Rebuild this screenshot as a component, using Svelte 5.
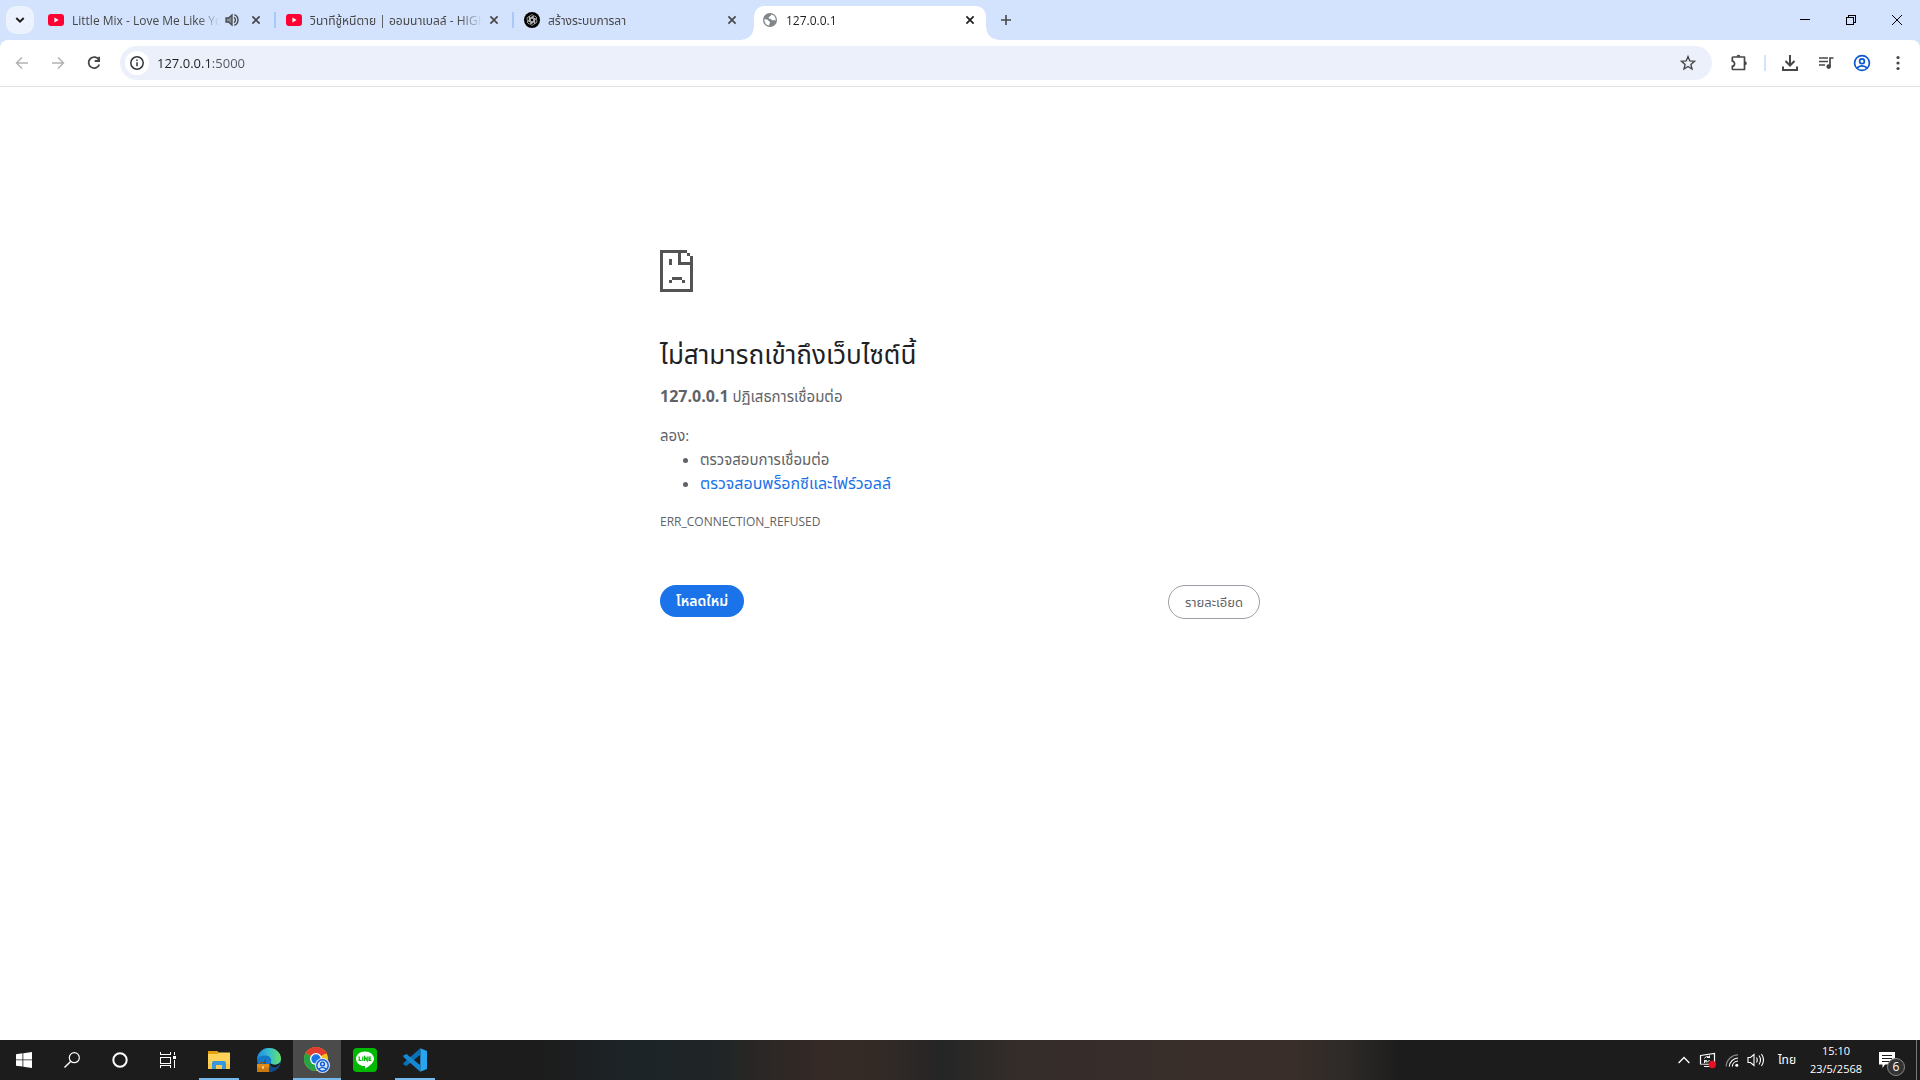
<script>
  const tabs = [
    { title: 'Little Mix - Love Me Like You', icon: 'youtube', audio: true },
    { title: 'วินาทีชู้หนีตาย | ออมนาเบลล์ - HIGHLIGHT', icon: 'youtube' },
    { title: 'สร้างระบบการลา', icon: 'gpt' },
    { title: '127.0.0.1', icon: 'globe', active: true }
  ];
  let url = $state('127.0.0.1:5000');
</script>

{#snippet cross()}
  <svg viewBox="0 0 16 16" width="16" height="16"><path d="M4.4 4.4l7.2 7.2M11.6 4.4l-7.2 7.2" fill="none" stroke="currentColor" stroke-width="1.7" /></svg>
{/snippet}

{#snippet favicon(kind)}
  {#if kind === 'youtube'}
    <svg viewBox="0 0 16 16" width="16" height="16"><rect y="2" width="16" height="12" rx="3" fill="#ff0033" /><path d="M6.4 5.6v4.8L10.6 8z" fill="#fff" /></svg>
  {:else if kind === 'gpt'}
    <svg viewBox="0 0 16 16" width="16" height="16">
      <circle cx="8" cy="8" r="8" fill="#000" />
      <g fill="none" stroke="#ccc" stroke-width=".7">
        {#each [0, 60, 120, 180, 240, 300] as a}
          <path transform="rotate({a} 8 8)" d="M5.400 9.400V5.200a2.300 2.300 0 0 1 4.300-1.200L6.400 5.900v3.400" />
        {/each}
      </g>
    </svg>
  {:else}
    <svg viewBox="0 0 16 16" width="16" height="16"><circle cx="8" cy="8" r="7" fill="#80868b" /><path d="M2.300 7.300c2 0 3.400.2 4 1.100.4.900 1.500.8 1.700 1.800.1.900-.8 1.300-.9 3.400A5.800 5.800 0 0 1 2.300 7.300zM9.300 2.400c-.1 1-.7 1.500-1.600 1.600-.2 1.200-.7 1.400-1.200 1.900.4.700.9 1 1.900.9.900.2 1 1.300 1.800 1.500 1.200 0 2.200-.3 3.500.3A5.900 5.900 0 0 0 9.300 2.400z" fill="#fff" /></svg>
  {/if}
{/snippet}

<div class="screen">
  <header class="tabbar">
    <button class="tabsearch" aria-label="ค้นหาแท็บ"><svg viewBox="0 0 16 16" width="16" height="16"><path d="M4.300 6l3.700 3.700L11.700 6" fill="none" stroke="#1f1f1f" stroke-width="2" /></svg></button>
    <div class="tabs">
      {#each tabs as tab}
        <div class="tab" class:active={tab.active}>
          {@render favicon(tab.icon)}
          <button class="title">{tab.title}</button>
          {#if tab.audio}
            <button class="mini" aria-label="ปิดเสียงแท็บ"><svg viewBox="0 0 16 16" width="16" height="16"><path d="M2 6h2.500L8 3v10l-3.500-3H2z" fill="#8b9098" stroke="#474b50" stroke-width="1.300" /><path d="M10 5.300a3.200 3.200 0 0 1 0 5.400M10.300 2.600a5.800 5.800 0 0 1 0 10.800" fill="none" stroke="#474b50" stroke-width="1.400" /></svg></button>
          {/if}
          <button class="mini" aria-label="ปิด">{@render cross()}</button>
        </div>
      {/each}
    </div>
    <button class="newtab" aria-label="แท็บใหม่"><svg viewBox="0 0 16 16" width="16" height="16"><path d="M8 3v10M3 8h10" stroke="#474747" stroke-width="1.600" /></svg></button>
    <div class="window">
      <button aria-label="ย่อ"><svg viewBox="0 0 10 10" width="10" height="10" shape-rendering="crispEdges"><path d="M0 4.500h10" stroke="#000" /></svg></button>
      <button aria-label="คืนค่า"><svg viewBox="0 0 10 10" width="10" height="10" shape-rendering="crispEdges"><path d="M.5 2.500h7v7h-7zM2.500 2.500v-2h7v7h-2" fill="none" stroke="#000" /></svg></button>
      <button aria-label="ปิดหน้าต่าง"><svg viewBox="0 0 10 10" width="10" height="10"><path d="M0 0l10 10M10 0L0 10" stroke="#000" /></svg></button>
    </div>
  </header>

  <nav class="toolbar">
    <button class="tool" aria-label="ย้อนกลับ"><svg viewBox="0 0 20 20" width="20" height="20"><path d="M16 10H5M10 4.500L4.500 10l5.500 5.500" fill="none" stroke="#b1b2b4" stroke-width="1.500" /></svg></button>
    <button class="tool" aria-label="ไปข้างหน้า"><svg viewBox="0 0 20 20" width="20" height="20"><path d="M4 10h11M10 4.500l5.500 5.500-5.500 5.500" fill="none" stroke="#b1b2b4" stroke-width="1.500" /></svg></button>
    <button class="tool" aria-label="โหลดซ้ำ"><svg viewBox="0 0 20 20" width="20" height="20"><path d="M15 7A5.500 5.500 0 1 0 15.300 11.500" fill="none" stroke="#474747" stroke-width="1.800" /><path d="M15.100 3.800V8h-4.400" fill="none" stroke="#474747" stroke-width="1.800" /></svg></button>
    <div class="omnibox">
      <button class="info" aria-label="ดูข้อมูลเว็บไซต์"><svg viewBox="0 0 16 16" width="16" height="16"><circle cx="8" cy="8" r="6.200" fill="none" stroke="#30343a" stroke-width="1.500" /><path d="M8 7.200v4M8 4.500v1.500" stroke="#30343a" stroke-width="1.500" /></svg></button>
      <input aria-label="ที่อยู่" bind:value={url} spellcheck="false" />
      <button class="info star" aria-label="บุ๊กมาร์ก"><svg viewBox="0 0 18 18" width="18" height="18"><path d="M9 2.500l1.800 4.400 4.700.4-3.600 3.100 1.100 4.600L9 12.500 5 15l1.100-4.600-3.600-3.100 4.700-.4z" fill="none" stroke="#474747" stroke-width="1.400" /></svg></button>
    </div>
    <button class="tool" aria-label="ส่วนขยาย"><svg viewBox="0 0 20 20" width="20" height="20"><path d="M4 4h11.500v12.500H4q-.7 0-.7-.7v-2.600c3 0 3-5 0-5V4.700Q3.300 4 4 4z" fill="none" stroke="#474747" stroke-width="1.700" stroke-linejoin="round" /><path d="M7.500 3.700a2 2 0 0 1 4 0zM15.800 8.200a2 2 0 0 1 0 4z" fill="#474747" /></svg></button>
    <i class="divider"></i>
    <button class="tool" aria-label="ดาวน์โหลด"><svg viewBox="0 0 20 20" width="20" height="20"><path d="M10 2v10M5.500 8l4.500 4.500L14.500 8M3 13.500V17h14v-3.500" fill="none" stroke="#474747" stroke-width="2" /></svg></button>
    <button class="tool" aria-label="ควบคุมสื่อ"><svg viewBox="0 0 20 20" width="20" height="20"><path d="M3 5h9M3 8.500h9M3 12h6M14 14V5h3.500" fill="none" stroke="#474747" stroke-width="1.700" /><circle cx="12.700" cy="13.600" r="2.300" fill="#474747" /></svg></button>
    <button class="tool" aria-label="โปรไฟล์"><svg viewBox="0 0 20 20" width="20" height="20"><g fill="none" stroke="#0b57d0" stroke-width="1.700"><circle cx="10" cy="10" r="7.400" /><circle cx="10" cy="8.200" r="2.400" /><path d="M4.800 15.200c2.800-3 7.600-3 10.400 0" /></g></svg></button>
    <button class="tool" aria-label="เมนู"><svg viewBox="0 0 20 20" width="20" height="20"><g fill="#474747"><circle cx="10" cy="4.500" r="1.600" /><circle cx="10" cy="10" r="1.600" /><circle cx="10" cy="15.500" r="1.600" /></g></svg></button>
  </nav>

  <main>
    <div class="error">
      <svg class="sad" viewBox="0 0 33 42" width="33" height="42" shape-rendering="crispEdges" fill="#535353"><path d="M0 0h27v3H3v36h27V6h3v36H0zM27 3h3v3h-3zM18 3h3v9h9v3H18zM9 9h3v6H9zM12 27h10v3H12zM9 30h3v3H9zM22 30h3v3h-3z" /></svg>
      <h1>ไม่สามารถเข้าถึงเว็บไซต์นี้</h1>
      <p><strong>127.0.0.1</strong> ปฏิเสธการเชื่อมต่อ</p>
      <div class="try">
        <p>ลอง:</p>
        <ul>
          <li>ตรวจสอบการเชื่อมต่อ</li>
          <li><a href="#buttons">ตรวจสอบพร็อกซีและไฟร์วอลล์</a></li>
        </ul>
      </div>
      <p class="code">ERR_CONNECTION_REFUSED</p>
      <div class="actions" id="buttons">
        <button class="reload">โหลดใหม่</button>
        <button class="details">รายละเอียด</button>
      </div>
    </div>
  </main>

  <footer class="taskbar">
    <button class="app" aria-label="เริ่ม"><svg viewBox="0 0 16 16" width="16" height="16" fill="#fff"><path d="M0 2.200l6.500-.9v6.200H0zM7.300 1.200L16 0v7.500H7.300zM0 8.300h6.500v6.300L0 13.800zM7.300 8.300H16V16l-8.700-1.200z" /></svg></button>
    <button class="app" aria-label="ค้นหา"><svg viewBox="0 0 16 16" width="16" height="16"><circle cx="10.300" cy="5.700" r="5" fill="none" stroke="#fff" stroke-width="1.200" /><path d="M6.600 9.400L.5 15.500" stroke="#fff" stroke-width="1.400" /></svg></button>
    <button class="app" aria-label="Cortana"><svg viewBox="0 0 16 16" width="16" height="16"><circle cx="8" cy="8" r="6.700" fill="none" stroke="#fff" stroke-width="2" /></svg></button>
    <button class="app" aria-label="มุมมองงาน"><svg viewBox="0 0 16 16" width="16" height="16" shape-rendering="crispEdges"><path d="M.5 0v2.500h10V0M.5 5.500h10v6H.5zM.5 16v-2.500h10V16M14.500 0v3M14.500 8v8" fill="none" stroke="#fff" /><path d="M13 4h3v3h-3z" fill="#fff" /></svg></button>
    <button class="app wide first running" aria-label="File Explorer"><svg viewBox="0 0 22 18" width="22" height="18"><path d="M0 0h9l1.500 1.500H22V18H0z" fill="#ffd35a" /><path d="M0 0h9l1 1v2H0z" fill="#e5a00d" /><path d="M0 13h22v5H0z" fill="#fbc94b" /><path d="M4 18v-6q0-2 2-2h10q2 0 2 2v6h-4v-4H8v4z" fill="#3a96dd" /></svg></button>
    <button class="app" aria-label="Microsoft Edge">
      <svg viewBox="0 0 24 24" width="24" height="24">
        <defs>
          <linearGradient id="edgeTop"><stop offset=".1" stop-color="#2393dc" /><stop offset=".5" stop-color="#36bfcd" /><stop offset="1" stop-color="#69df67" /></linearGradient>
        </defs>
        <circle cx="12" cy="12" r="11.900" fill="#1479c9" />
        <path d="M8.600 11c-1 6 4 9 8.500 8 2.500-.4 4-1.600 5.500-3.300C19 25 12 25 9 22s-3-8-.4-11z" fill="#114a8b" />
        <path d="M23.900 12.500c-1 3-3.500 4-6.500 4-2 0-3.600-.4-4.200-1.400-1.500 3 2.500 5.400 6.300 4 1.500-.5 2.500-1.400 3.300-2.500z" fill="#1c1c1c" />
        <path d="M0 11C1 4 6 0 12 0c7 0 12 5 12 10.500 0 4-3 6-6.500 6-3 0-4-1-3.500-2.500 1-3-1-6.500-5.500-6.500C4.500 7.500 1 9 0 11z" fill="url(#edgeTop)" />
        <rect y="16" width="12" height="8" fill="#c97812" /><path d="M0 16h12v3.500H0z" fill="#e18b16" /><path d="M3.500 16v-1.500h5V16" fill="none" stroke="#8b520a" /><rect x="5" y="18.500" width="2" height="2" fill="#ffe089" />
      </svg>
    </button>
    <button class="app current running" aria-label="Google Chrome">
      <svg viewBox="0 0 26 26" width="26" height="26">
        <circle cx="12" cy="12" r="12" fill="#fbc116" />
        <path d="M12 12L1.600 6A12 12 0 0 1 22.400 6z" fill="#e33b2e" />
        <path d="M12 12L1.600 6A12 12 0 0 0 12 24l5-9z" fill="#26a344" />
        <path d="M12 6h10.400" stroke="#e33b2e" stroke-width="2" />
        <circle cx="12" cy="12" r="6" fill="#fff" /><circle cx="12" cy="12" r="4.700" fill="#1a73e8" />
        <circle cx="18.500" cy="18.500" r="7.500" fill="#d3e3fd" /><g fill="none" stroke="#0b57d0" stroke-width="1.400"><circle cx="18.500" cy="18.500" r="5.700" /><circle cx="18.500" cy="17" r="1.900" /><path d="M14.500 22.300c2.300-2.200 5.700-2.200 8 0" /></g>
      </svg>
    </button>
    <button class="app" aria-label="LINE"><svg viewBox="0 0 24 24" width="24" height="24"><rect width="24" height="24" rx="4" fill="#00b900" /><path d="M12 3.500c5 0 9 3.200 9 7.200 0 3.700-4 7-9 10 .4-1.500.5-2.500-.5-2.600C6.500 17.800 3 14.600 3 10.700c0-4 4-7.200 9-7.200z" fill="#fff" /><g fill="none" stroke="#00b900" stroke-width="1.200"><path d="M6.200 8.500v4h2.300M9.800 8.500v4.500M11.600 13V8.800l2.600 3.700V8.500M18.300 9h-2.300v3.500h2.300M16 10.800h2" /></g></svg></button>
    <button class="app wide running" aria-label="Visual Studio Code"><svg viewBox="0 0 24 24" width="24" height="24"><path d="M17.300.3L24 3v18l-6.700 2.700z" fill="#29a5ee" /><path d="M17.300.3v6.500L3.500 18 0 16.200 1 14.500z" fill="#0871b7" /><path d="M17.300 23.700v-6.500L3.500 6 0 7.800l1 1.700z" fill="#1689d4" /></svg></button>

    <div class="tray">
      <button aria-label="แสดงไอคอนที่ซ่อน"><svg viewBox="0 0 12 12" width="12" height="12"><path d="M.6 9L6 3.500 11.400 9" fill="none" stroke="#fff" stroke-width="1.300" /></svg></button>
      <button aria-label="Windows Update"><svg viewBox="0 0 18 18" width="18" height="18"><path d="M1.500 4.500l14-2v11l-14-.5zM5 15.500h6" fill="none" stroke="#fff" stroke-width="1.200" /><path d="M5.500 7.500a3 3 0 0 1 5-1V4.500M10.500 9a3 3 0 0 1-5 1V12M8 6.500h3M5 9.600h3" fill="none" stroke="#fff" /><circle cx="13.300" cy="13.500" r="3.700" fill="#e81123" /></svg></button>
      <button aria-label="เครือข่าย"><svg viewBox="0 0 14 14" width="14" height="14"><g fill="none" stroke="#fff" stroke-width="1.200"><path d="M1.200 13.500A12 12 0 0 1 13 1.800" stroke="#8a8a8a" /><path d="M4.300 13.500A9 9 0 0 1 13 5M7.300 13.500A6 6 0 0 1 13 8" /></g><circle cx="11.800" cy="12.300" r="1.500" fill="#fff" /></svg></button>
      <button aria-label="เสียง"><svg viewBox="0 0 18 16" width="18" height="16"><path d="M1 5.500h2.500L7 2.500v11l-3.500-3H1z" fill="none" stroke="#fff" stroke-width="1.100" /><path d="M9.500 5.500q1.500 2.500 0 5M12 3.500q3 4.500 0 9M14.500 2q4 6 0 12" fill="none" stroke="#fff" stroke-width="1.100" /></svg></button>
      <button class="lang">ไทย</button>
      <button class="clock"><time>15:10</time><time>23/5/2568</time></button>
      <button class="notice" aria-label="การแจ้งเตือน"><svg viewBox="0 0 16 16" width="16" height="16"><path d="M0 0h16v12.500H6L3.500 16v-3.500H0z" fill="#fff" /><path d="M3 3.500h10M3 6.500h10M3 9.500h7" stroke="#1c1c1c" /></svg><span>6</span></button>
      <button class="desktop" aria-label="แสดงเดสก์ท็อป"></button>
    </div>
  </footer>
</div>

<style>
  :global(body) { margin: 0; }
  * { box-sizing: border-box; }
  .screen { min-height: 100vh; display: flex; flex-direction: column; background: #fff; font-family: "Open Sans", "Noto Sans", "Noto Sans Thai", sans-serif; }
  button { border: 0; padding: 0; margin: 0; background: none; font: inherit; color: inherit; display: flex; align-items: center; justify-content: center; }
  svg { display: block; flex: none; }

  .tabbar { display: flex; align-items: center; height: 40px; padding-left: 6px; background: #d3e3fd; color: #474747; }
  .tabsearch { width: 28px; height: 28px; border-radius: 10px; background: #ecf2fe; margin-right: 4px; }
  .tabs { display: flex; align-items: center; height: 40px; }
  .tab { position: relative; display: flex; align-items: center; gap: 8px; width: 238px; height: 28px; padding: 0 12px 0 10px; font-size: 12px; }
  .tab:not(.active)::after { content: ""; position: absolute; right: 0; top: 6px; width: 2px; height: 16px; background: #a8c7fa; }
  .tab:nth-last-child(2)::after { display: none; }
  .title { flex: 1; min-width: 0; justify-content: flex-start; margin-right: -4px; padding-top: 2px; white-space: nowrap; overflow: hidden; line-height: 24px; mask-image: linear-gradient(90deg, #000 calc(100% - 22px), transparent); }
  .mini { width: 16px; height: 16px; }
  .active { width: 232px; height: 34px; align-self: flex-end; margin-left: 2px; padding: 0 8px 6px; background: #fff; color: #1f1f1f; border-radius: 10px 10px 0 0; }
  .active::before, .active::after { content: ""; position: absolute; bottom: 0; width: 12px; height: 12px; }
  .active::before { right: 100%; background: radial-gradient(circle at 0 0, transparent 11px, #fff 12px); }
  .active::after { left: 100%; background: radial-gradient(circle at 100% 0, transparent 11px, #fff 12px); }
  .newtab { width: 28px; height: 28px; margin-left: 6px; }
  .window { display: flex; margin-left: auto; }
  .window button { width: 46px; height: 40px; }

  .toolbar { display: flex; align-items: center; height: 47px; padding: 0 4px; background: #fff; border-bottom: 1px solid #dfe1e2; box-shadow: 0 -8px 0 #d3e3fd; border-radius: 8px 8px 0 0; clip-path: inset(0); }
  .tool { width: 36px; height: 34px; }
  .omnibox { flex: 1; display: flex; align-items: center; height: 34px; margin: 0 9px 0 8px; padding: 0 12px 0 5px; background: #ecf0fa; border-radius: 17px; }
  .info { width: 24px; height: 24px; border-radius: 50%; background: #fff; }
  .star { background: none; }
  input { flex: 1; min-width: 0; border: 0; outline: 0; padding: 0 0 0 8px; font: 13px/24px "Open Sans", sans-serif; color: transparent; background: linear-gradient(90deg, #1f1f1f 63px, #51555c 63px); background-clip: text; }
  .divider { width: 2px; height: 16px; margin: 0 6px 0 7px; background: #d3e3fd; }

  main { flex: 1; }
  .error { width: 600px; max-width: 100%; margin: 0 auto; padding-top: 163px; color: #5f6368; font-size: 15px; line-height: 24px; }
  h1 { margin: 47px 0 15px; font-size: 26px; font-weight: 400; line-height: 30px; color: #202124; }
  p { margin: 0; }
  strong { font-size: 16px; line-height: 24px; }
  .try { margin-top: 15px; }
  ul { margin: 0; padding-left: 40px; }
  a { color: #1a73e8; font-size: 16px; text-decoration: none; }
  .code { margin-top: 15px; font-size: 12px; }
  .actions { display: flex; justify-content: space-between; align-items: flex-start; margin-top: 51px; }
  .reload { height: 32px; padding: 0 16px; border-radius: 16px; background: #1a73e8; color: #fff; font-size: 14px; font-weight: 600; }
  .details { height: 34px; padding: 0 16px; border: 1px solid #9aa0a6; border-radius: 17px; font-size: 13px; }

  .taskbar { display: flex; height: 40px; color: #fff; background: linear-gradient(90deg, #1c1c1c 28%, #1d2428 33%, #1f2526 37%, #2c2725 40%, #352a26 43%, #332a26 46%, #242525 49%, #352d2a 53%, #3a2e2a 67%, #2e2b28 70%, #1c1c1c 73%); }
  .app { position: relative; width: 48px; height: 40px; }
  .wide { width: 52px; }
  .first { margin-left: 1px; }
  .running::after { content: ""; position: absolute; left: 6px; right: 6px; bottom: 0; height: 2px; background: #76b9ed; }
  .current { background: #4b4b4b; }
  .current::after { left: 0; right: 0; }
  .tray { display: flex; align-items: center; margin-left: auto; }
  .tray button { height: 40px; width: 24px; }
  .tray .lang { width: 38px; font-size: 12px; }
  .tray .clock { width: 60px; flex-direction: column; font-size: 11px; line-height: 18px; }
  .tray .notice { position: relative; width: 50px; padding-right: 8px; }
  .notice span { position: absolute; left: 21px; top: 18px; width: 18px; height: 18px; border: 1px solid #888; border-radius: 50%; background: #333; font-size: 12px; line-height: 16px; text-align: center; }
  .tray .desktop { width: 4px; border-left: 1px solid #777; }
</style>
